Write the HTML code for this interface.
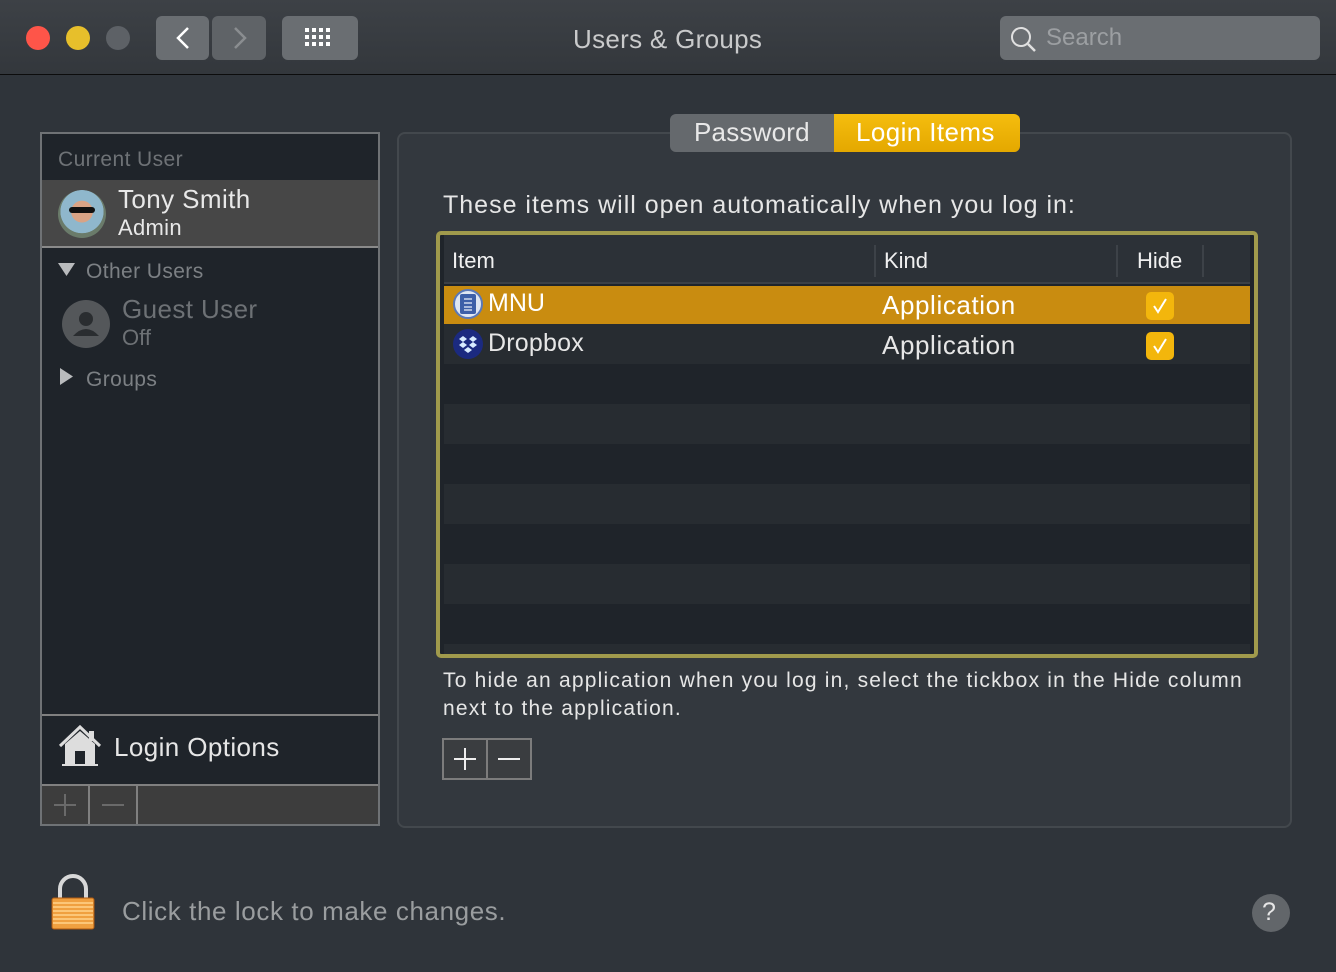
<!DOCTYPE html>
<html><head><style>
*{margin:0;padding:0;box-sizing:border-box}
body{width:1336px;height:972px;background:#2f343a;font-family:"Liberation Sans",sans-serif;position:relative;overflow:hidden;color:#e6e6e6}
.a{position:absolute}
.t{position:absolute;white-space:nowrap}
</style></head><body>
<div class="a" style="left:0;top:0;width:1336px;height:75px;background:linear-gradient(#3d4146,#33373c);border-bottom:1px solid #0c0c0c"></div>
<div class="a" style="left:26px;top:26px;width:24px;height:24px;border-radius:50%;background:#fe5549"></div>
<div class="a" style="left:66px;top:26px;width:24px;height:24px;border-radius:50%;background:#e7bf2b"></div>
<div class="a" style="left:106px;top:26px;width:24px;height:24px;border-radius:50%;background:#5d6166"></div>
<div class="a" style="left:156px;top:16px;width:53px;height:44px;border-radius:6px;background:#6a6e72"></div>
<div class="a" style="left:212px;top:16px;width:54px;height:44px;border-radius:6px;background:#5f6367"></div>
<svg class="a" style="left:156px;top:16px" width="110" height="44"><path d="M32 12 L22 22 L32 32" stroke="#fff" stroke-width="2.5" fill="none"/><path d="M79 12 L89 22 L79 32" stroke="#8a8d90" stroke-width="2.5" fill="none"/></svg>
<div class="a" style="left:282px;top:16px;width:76px;height:44px;border-radius:6px;background:#6a6e72"></div>
<svg class="a" style="left:305px;top:28px" width="30" height="20"><g fill="#fff"><rect x="0" y="0" width="4" height="4"/><rect x="7" y="0" width="4" height="4"/><rect x="14" y="0" width="4" height="4"/><rect x="21" y="0" width="4" height="4"/><rect x="0" y="7" width="4" height="4"/><rect x="7" y="7" width="4" height="4"/><rect x="14" y="7" width="4" height="4"/><rect x="21" y="7" width="4" height="4"/><rect x="0" y="14" width="4" height="4"/><rect x="7" y="14" width="4" height="4"/><rect x="14" y="14" width="4" height="4"/><rect x="21" y="14" width="4" height="4"/></g></svg>
<div class="t" style="left:573px;top:24px;font-size:26px;color:#c9cacb;letter-spacing:0.3px">Users &amp; Groups</div>
<div class="a" style="left:1000px;top:16px;width:320px;height:44px;border-radius:6px;background:#6a6e72"></div>
<svg class="a" style="left:1008px;top:24px" width="32" height="30"><circle cx="13" cy="13" r="9" stroke="#e0e0e0" stroke-width="2" fill="none"/><path d="M20 20 L27 27" stroke="#e0e0e0" stroke-width="2.5"/></svg>
<div class="t" style="left:1046px;top:24px;font-size:24px;color:#9c9fa2">Search</div>

<div class="a" style="left:40px;top:132px;width:340px;height:694px;background:#1f242a;border:2px solid #6f7275"></div>
<div class="t" style="left:58px;top:148px;font-size:21px;color:#6e7276;letter-spacing:0.4px">Current User</div>
<div class="a" style="left:42px;top:180px;width:336px;height:68px;background:#474747;border-bottom:2px solid #8a8a8a"></div>
<div class="a" style="left:58px;top:190px;width:48px;height:48px;border-radius:50%;background:radial-gradient(circle at 50% 45%,#d9a385 0 30%,#8fb7cc 31% 60%,#6a7b6a 61%)"></div>
<div class="a" style="left:69px;top:207px;width:26px;height:6px;background:#111;border-radius:3px"></div>
<div class="t" style="left:118px;top:184px;font-size:26px;color:#e8e8e8;letter-spacing:0.4px">Tony Smith</div>
<div class="t" style="left:118px;top:215px;font-size:22px;color:#e8e8e8;letter-spacing:0.3px">Admin</div>
<svg class="a" style="left:58px;top:263px" width="18" height="14"><path d="M0 0 H17 L8.5 13Z" fill="#b9bbbd"/></svg>
<div class="t" style="left:86px;top:260px;font-size:21px;color:#7c8084;letter-spacing:0.4px">Other Users</div>
<div class="a" style="left:62px;top:300px;width:48px;height:48px;border-radius:50%;background:#54575a"></div>
<svg class="a" style="left:62px;top:300px" width="48" height="48"><circle cx="24" cy="19" r="7" fill="#2a2d30"/><path d="M11 36 Q24 22 37 36Z" fill="#2a2d30"/></svg>
<div class="t" style="left:122px;top:294px;font-size:26px;color:#6d7175;letter-spacing:0.4px">Guest User</div>
<div class="t" style="left:122px;top:325px;font-size:22px;color:#6d7175">Off</div>
<svg class="a" style="left:60px;top:368px" width="14" height="18"><path d="M0 0 V17 L13 8.5Z" fill="#b9bbbd"/></svg>
<div class="t" style="left:86px;top:368px;font-size:21px;color:#7c8084;letter-spacing:0.4px">Groups</div>
<div class="a" style="left:42px;top:714px;width:336px;height:2px;background:#808080"></div>
<svg class="a" style="left:58px;top:724px" width="44" height="44"><path d="M2 22 L22 3 L42 22" stroke="#ddd" stroke-width="3" fill="none"/><rect x="31" y="7" width="5" height="10" fill="#ddd"/><path d="M7 20 L22 7 L37 20 V41 H7Z" fill="#ddd"/><rect x="17" y="27" width="10" height="14" fill="#1f242a"/><rect x="4" y="40" width="36" height="2" fill="#ddd"/></svg>
<div class="t" style="left:114px;top:732px;font-size:26px;color:#e6e6e6;letter-spacing:0.4px">Login Options</div>
<div class="a" style="left:42px;top:784px;width:336px;height:40px;background:#3d3d3d;border-top:2px solid #808080"></div>
<div class="a" style="left:88px;top:786px;width:2px;height:38px;background:#808080"></div>
<div class="a" style="left:136px;top:786px;width:2px;height:38px;background:#808080"></div>
<div class="a" style="left:54px;top:804px;width:22px;height:2px;background:#6a6a6a"></div>
<div class="a" style="left:64px;top:794px;width:2px;height:22px;background:#6a6a6a"></div>
<div class="a" style="left:102px;top:804px;width:22px;height:2px;background:#6a6a6a"></div>

<div class="a" style="left:397px;top:132px;width:895px;height:696px;border:2px solid #43484d;border-radius:8px;background:#33383e"></div>
<div class="a" style="left:670px;top:114px;width:164px;height:38px;background:#65696d;border-radius:6px 0 0 6px"></div>
<div class="a" style="left:834px;top:114px;width:186px;height:38px;background:linear-gradient(#f5bd0e,#e4a800);border-radius:0 6px 6px 0"></div>
<div class="t" style="left:694px;top:117px;font-size:26px;color:#e8e8e8;letter-spacing:0.2px">Password</div>
<div class="t" style="left:856px;top:117px;font-size:26px;color:#fff;letter-spacing:0.4px">Login Items</div>
<div class="t" style="left:443px;top:191px;font-size:25px;color:#e6e6e6;letter-spacing:1px">These items will open automatically when you log in:</div>

<div class="a" style="left:436px;top:231px;width:822px;height:427px;border:4px solid #a09a4c;border-radius:5px;background:#1f242a;overflow:hidden">
 <div class="a" style="left:4px;top:0;width:806px;height:49px;background:#2c3137;border-bottom:2px solid #3b4046"></div>
 <div class="a" style="left:434px;top:10px;width:2px;height:32px;background:#3d4248"></div>
 <div class="a" style="left:676px;top:10px;width:2px;height:32px;background:#3d4248"></div>
 <div class="a" style="left:762px;top:10px;width:2px;height:32px;background:#3d4248"></div>
 <div class="t" style="left:12px;top:13px;font-size:22px;color:#f0f0f0">Item</div>
 <div class="t" style="left:444px;top:13px;font-size:22px;color:#f0f0f0">Kind</div>
 <div class="t" style="left:697px;top:13px;font-size:22px;color:#f0f0f0">Hide</div>
 <div class="a" style="left:4px;top:51px;width:806px;height:38px;background:#c98c10"></div>
 <div class="a" style="left:4px;top:89px;width:806px;height:40px;background:#272c31"></div>
 <div class="a" style="left:4px;top:169px;width:806px;height:40px;background:#272c31"></div>
 <div class="a" style="left:4px;top:249px;width:806px;height:40px;background:#272c31"></div>
 <div class="a" style="left:4px;top:329px;width:806px;height:40px;background:#272c31"></div>
 <div class="a" style="left:4px;top:409px;width:806px;height:40px;background:#272c31"></div>
</div>
<div class="a" style="left:453px;top:289px;width:30px;height:30px;border-radius:50%;background:#dfe6f2;border:2px solid #5a78b8"></div>
<svg class="a" style="left:460px;top:294px" width="16" height="20"><rect x="0" y="0" width="16" height="20" rx="2" fill="#3d5fa8"/><g stroke="#cfd9ee" stroke-width="1.5"><path d="M4 5H12M4 9H12M4 13H12M4 16H12"/></g></svg>
<div class="a" style="left:453px;top:329px;width:30px;height:30px;border-radius:50%;background:#1b2a80"></div>
<svg class="a" style="left:453px;top:329px" width="30" height="30"><g fill="#d7ebff"><path d="M10 7 L14 10 L10 13 L6 10Z"/><path d="M20 7 L24 10 L20 13 L16 10Z"/><path d="M10 13 L14 16 L10 19 L6 16Z"/><path d="M20 13 L24 16 L20 19 L16 16Z"/><path d="M15 18 L19 21 L15 24 L11 21Z"/></g></svg>
<div class="t" style="left:488px;top:289px;font-size:25px;color:#fff">MNU</div>
<div class="t" style="left:488px;top:329px;font-size:25px;color:#e6e6e6;letter-spacing:0.2px">Dropbox</div>
<div class="t" style="left:882px;top:290px;font-size:26px;color:#fff;letter-spacing:0.6px">Application</div>
<div class="t" style="left:882px;top:330px;font-size:26px;color:#e6e6e6;letter-spacing:0.6px">Application</div>
<div class="a" style="left:1146px;top:292px;width:28px;height:28px;border-radius:5px;background:#f3b60c"></div>
<div class="a" style="left:1146px;top:332px;width:28px;height:28px;border-radius:5px;background:#f3b60c"></div>
<svg class="a" style="left:1146px;top:292px" width="28" height="70"><path d="M8 14 L12 20 L20 7" stroke="#fff" stroke-width="2" fill="none"/><path d="M8 54 L12 60 L20 47" stroke="#fff" stroke-width="2" fill="none"/></svg>

<div class="t" style="left:443px;top:667px;font-size:21px;color:#e6e6e6;line-height:28px;letter-spacing:1.2px">To hide an application when you log in, select the tickbox in the Hide column<br>next to the application.</div>
<div class="a" style="left:442px;top:738px;width:90px;height:42px;border:2px solid #7c7c7c;background:#3a3d40"></div>
<div class="a" style="left:486px;top:740px;width:2px;height:38px;background:#7c7c7c"></div>
<div class="a" style="left:454px;top:758px;width:22px;height:2px;background:#eee"></div>
<div class="a" style="left:464px;top:748px;width:2px;height:22px;background:#eee"></div>
<div class="a" style="left:498px;top:758px;width:22px;height:2px;background:#eee"></div>

<svg class="a" style="left:48px;top:874px" width="50" height="58"><path d="M12 26 V15 A13 13 0 0 1 38 15 V26" stroke="#d8d8d8" stroke-width="4" fill="none"/><rect x="4" y="24" width="42" height="31" rx="2" fill="#f0a040"/><g stroke="#ffd28a" stroke-width="1.5"><path d="M5 29H45M5 33H45M5 37H45M5 41H45M5 45H45M5 49H45"/></g><rect x="4" y="24" width="42" height="31" rx="2" fill="none" stroke="#b05a10" stroke-width="1"/></svg>
<div class="t" style="left:122px;top:896px;font-size:26px;color:#9a9d9f;letter-spacing:0.6px">Click the lock to make changes.</div>
<div class="a" style="left:1252px;top:894px;width:38px;height:38px;border-radius:50%;background:#62666a"></div>
<div class="t" style="left:1262px;top:898px;font-size:25px;color:#e6e6e6">?</div>
</body></html>
